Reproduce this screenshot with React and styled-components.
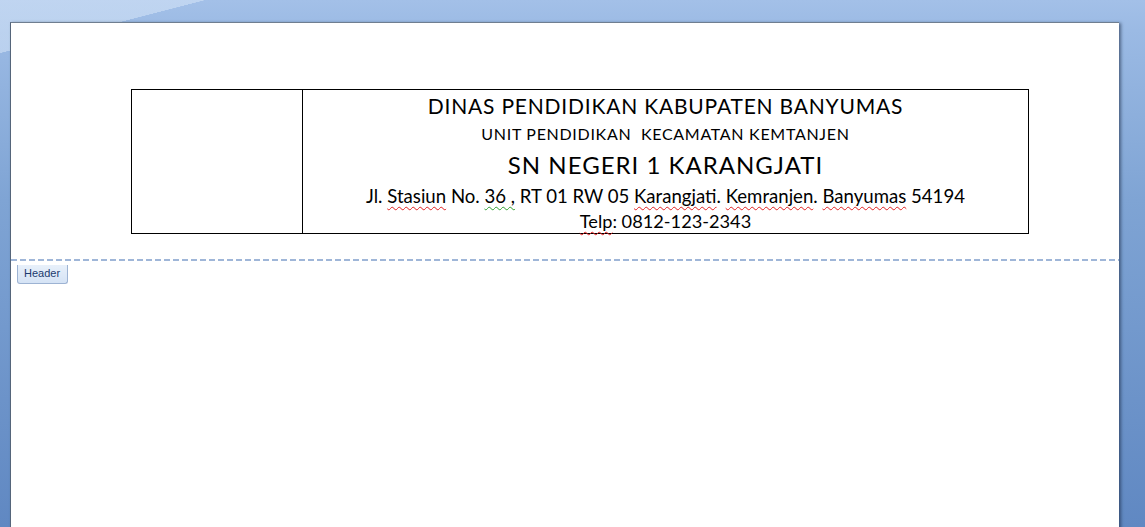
import React from 'react';
import styled, { createGlobalStyle } from 'styled-components';

const GlobalStyle = createGlobalStyle`
  html, body {
    margin: 0;
    padding: 0;
  }
  body {
    font-family: Lato, "Liberation Sans", sans-serif;
  }
`;

const Workspace = styled.div`
  box-sizing: border-box;
  width: 1145px;
  height: 527px;
  overflow: hidden;
  padding: 22px 0 0 10px;
  background:
    linear-gradient(165.5deg, rgba(215, 230, 248, 0.55) 0 38.5%, rgba(215, 230, 248, 0) 38.7%) 0 0 / 300px 60px no-repeat,
    linear-gradient(180deg, #a3c0e8 0, #9bbae4 30px, #7fa4d4 200px, #6088c2 527px);
`;

const Page = styled.div`
  box-sizing: border-box;
  width: 1109px;
  height: 520px;
  background: #fff;
  border-top: 1px solid #6f7e90;
  border-left: 1px solid #55657a;
  box-shadow: 2px 1px 3px rgba(20, 35, 60, 0.55);
  padding-top: 66px;
`;

const Letterhead = styled.table`
  border-collapse: collapse;
  margin-left: 120px;
  width: 898px;
  height: 145px;
  color: #000;

  td {
    border: 1px solid #000;
    padding: 0;
  }
`;

const LogoCell = styled.td`
  width: 170px;
`;

const TextCell = styled.td`
  text-align: center;
  vertical-align: top;
  padding-top: 2px !important;
`;

const Line = styled.div`
  height: ${(p) => p.h}px;
  line-height: ${(p) => p.h}px;
  font-size: ${(p) => p.size}px;
  letter-spacing: ${(p) => p.track || 0}px;
  white-space: pre;
`;

const Misspelt = styled.span`
  text-decoration: underline wavy ${(p) => (p.grammar ? '#2f9e2f' : '#e02020')};
  text-decoration-thickness: 1px;
  text-underline-offset: 3px;
  text-decoration-skip-ink: none;
`;

const HeaderBand = styled.div`
  margin-top: 25px;
`;

const DashedRule = styled.div`
  height: 2px;
  background: repeating-linear-gradient(90deg, #9fb6d8 0 6px, transparent 6px 9px);
`;

const HeaderTab = styled.div`
  display: inline-block;
  margin-left: 6px;
  padding: 2px 7px 3px 6px;
  font-family: "Liberation Sans", Arial, sans-serif;
  font-size: 11px;
  line-height: 13px;
  color: #1b3a6e;
  background: linear-gradient(180deg, #e8f0fa 0%, #d5e3f5 100%);
  border: 1px solid #9db3d3;
  border-top: none;
  border-radius: 0 0 3px 3px;
`;

export default function App() {
  return (
    <>
      <GlobalStyle />
      <Workspace>
        <Page>
          <Letterhead>
            <tbody>
              <tr>
                <LogoCell />
                <TextCell>
                  <Line h={28} size={21} track={0.8}>DINAS PENDIDIKAN KABUPATEN BANYUMAS</Line>
                  <Line h={28} size={16} track={0.7}>UNIT PENDIDIKAN  KECAMATAN KEMTANJEN</Line>
                  <Line h={34} size={24} track={1}>SN NEGERI 1 KARANGJATI</Line>
                  <Line h={28} size={18.6}>
                    Jl. <Misspelt>Stasiun</Misspelt> No. <Misspelt grammar>36 ,</Misspelt> RT 01 RW 05{' '}
                    <Misspelt>Karangjati</Misspelt>. <Misspelt>Kemranjen</Misspelt>.{' '}
                    <Misspelt>Banyumas</Misspelt> 54194
                  </Line>
                  <Line h={22} size={18.2}>
                    <Misspelt>Telp</Misspelt>: 0812-123-2343
                  </Line>
                </TextCell>
              </tr>
            </tbody>
          </Letterhead>
          <HeaderBand>
            <DashedRule />
            <HeaderTab>Header</HeaderTab>
          </HeaderBand>
        </Page>
      </Workspace>
    </>
  );
}
